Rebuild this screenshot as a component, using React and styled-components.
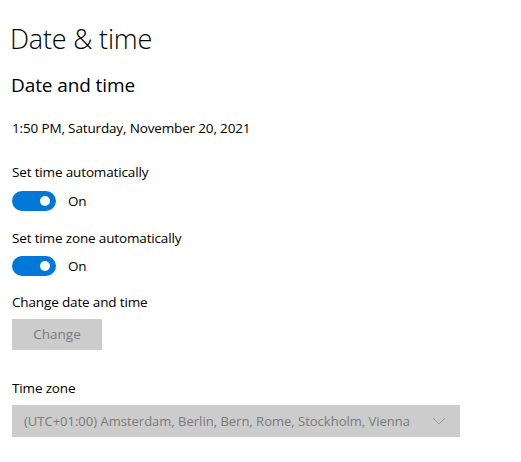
import React, { useState } from 'react';
import styled, { createGlobalStyle } from 'styled-components';

const GlobalStyle = createGlobalStyle`
  html, body {
    margin: 0;
    padding: 0;
    background: #fff;
  }
  body {
    font-family: "Open Sans", "Noto Sans", "Liberation Sans", sans-serif;
    color: #000;
  }
`;

const Page = styled.div`
  width: 521px;
  height: 462px;
  box-sizing: border-box;
  padding: 20px 0 0 12px;
  overflow: hidden;
`;

const Title = styled.h1`
  margin: 0 0 0 -2px;
  font-size: 27px;
  font-weight: 300;
  line-height: 38px;
  letter-spacing: -0.2px;
`;

const Subtitle = styled.h2`
  margin: 14px 0 0 -1px;
  font-size: 19px;
  font-weight: 400;
  line-height: 26px;
  letter-spacing: -0.1px;
`;

const Text = styled.div`
  font-size: 13.5px;
  line-height: 20px;
  margin-top: ${(p) => p.$top || 0}px;
  letter-spacing: -0.15px;
`;

const ToggleRow = styled.div`
  display: flex;
  align-items: center;
  gap: 12px;
  margin-top: ${(p) => p.$top || 0}px;
  cursor: pointer;
`;

const Track = styled.div`
  width: 44px;
  height: 20px;
  border-radius: 10px;
  box-sizing: border-box;
  background: ${(p) => (p.$on ? '#0078d7' : '#fff')};
  border: 2px solid ${(p) => (p.$on ? '#0078d7' : '#333')};
  display: flex;
  align-items: center;
  justify-content: ${(p) => (p.$on ? 'flex-end' : 'flex-start')};
  padding: 0 4px;
`;

const Knob = styled.div`
  width: 10px;
  height: 10px;
  border-radius: 50%;
  background: ${(p) => (p.$on ? '#fff' : '#333')};
`;

const Button = styled.button`
  display: block;
  margin-top: ${(p) => p.$top || 0}px;
  width: 90px;
  height: 31px;
  border: none;
  background: #cccccc;
  color: #7a7a7a;
  font-family: inherit;
  font-size: 13.5px;
  padding: 0 0 2px;
`;

const Select = styled.div`
  margin-top: ${(p) => p.$top || 0}px;
  width: 448px;
  height: 32px;
  box-sizing: border-box;
  background: #cccccc;
  color: #7a7a7a;
  font-size: 13px;
  display: flex;
  align-items: center;
  justify-content: space-between;
  padding: 0 14px 0 12px;
`;

function Toggle({ top }) {
  const [on, setOn] = useState(true);
  return (
    <ToggleRow $top={top} onClick={() => setOn(!on)}>
      <Track $on={on}>
        <Knob $on={on} />
      </Track>
      <Text>{on ? 'On' : 'Off'}</Text>
    </ToggleRow>
  );
}

export default function App() {
  return (
    <Page>
      <GlobalStyle />
      <Title>Date &amp; time</Title>
      <Subtitle>Date and time</Subtitle>
      <Text $top={20}>1:50 PM, Saturday, November 20, 2021</Text>
      <Text $top={24}>Set time automatically</Text>
      <Toggle top={9} />
      <Text $top={17}>Set time zone automatically</Text>
      <Toggle top={8} />
      <Text $top={16}>Change date and time</Text>
      <Button $top={7}>Change</Button>
      <Text $top={28}>Time zone</Text>
      <Select $top={7}>
        <span>(UTC+01:00) Amsterdam, Berlin, Bern, Rome, Stockholm, Vienna</span>
        <svg width="14" height="8" viewBox="0 0 14 8" fill="none">
          <path d="M1 1l6 6 6-6" stroke="#9a9a9a" strokeWidth="1" />
        </svg>
      </Select>
    </Page>
  );
}
